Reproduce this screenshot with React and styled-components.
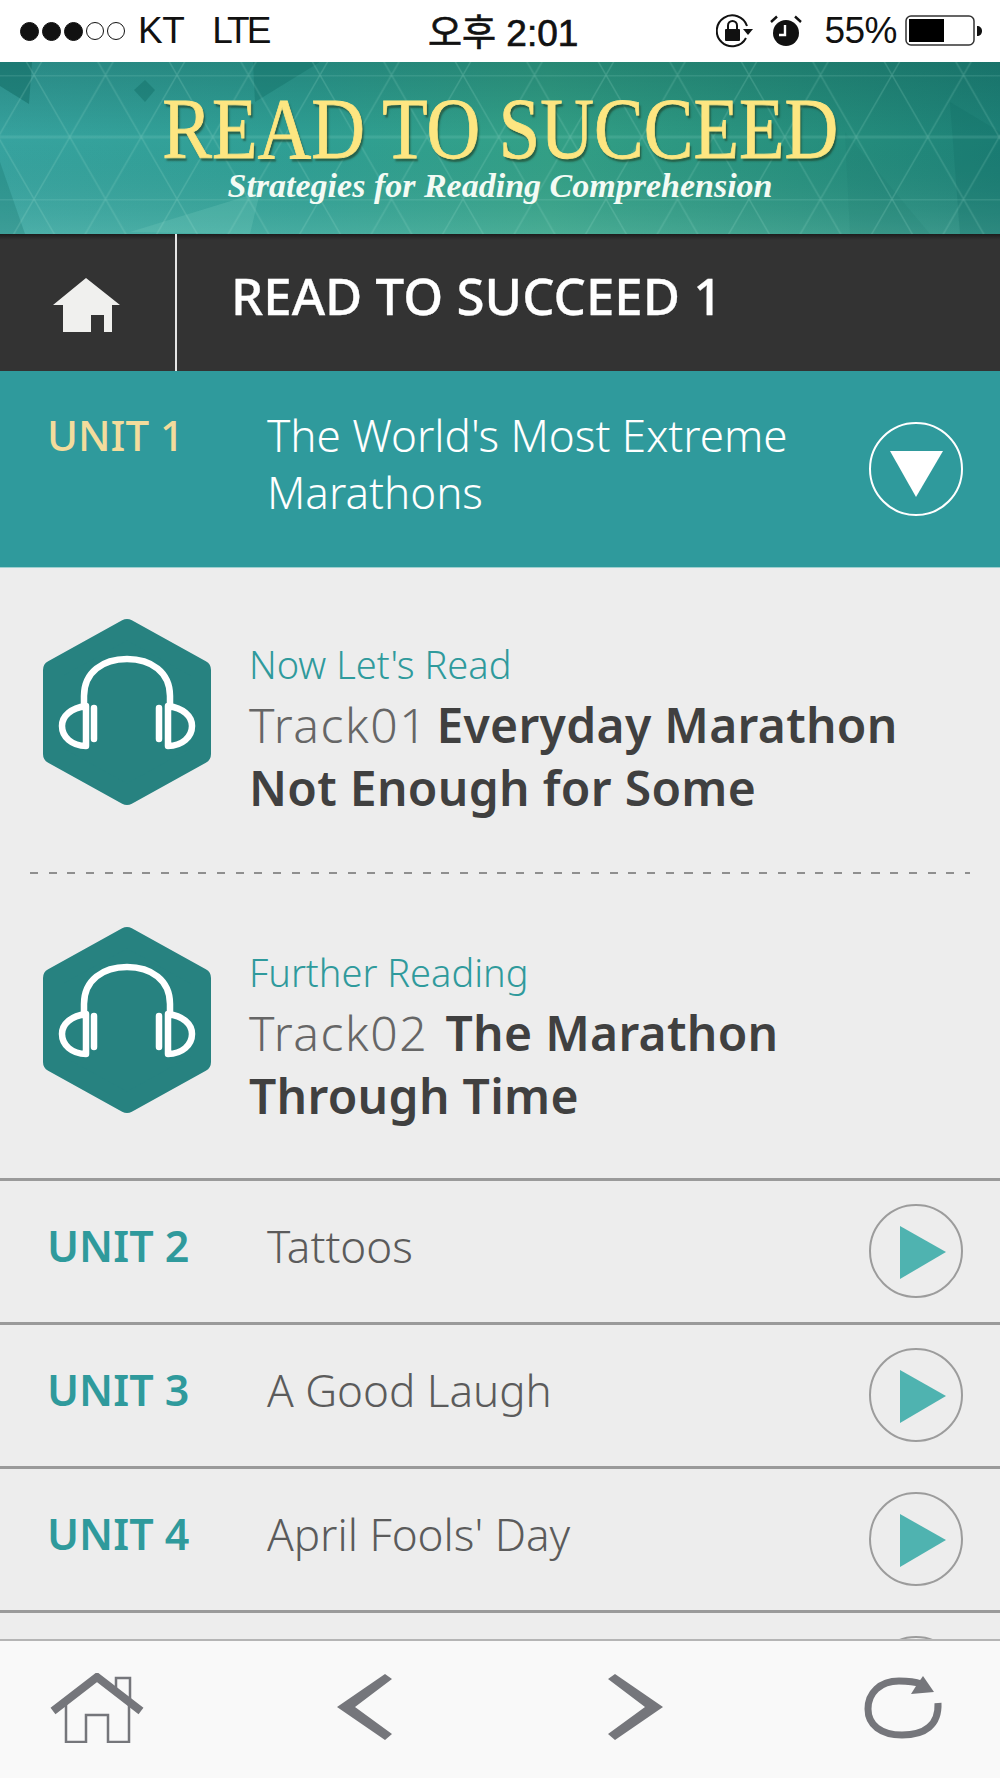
import styled, { createGlobalStyle } from "styled-components";

const GlobalStyle = createGlobalStyle`
  html, body {
    margin: 0;
    padding: 0;
    background: #ededed;
  }
  #root {
    width: 1000px;
    height: 1778px;
    overflow: hidden;
  }
`;

const TEXT_FONT = `"Noto Sans", "Open Sans", sans-serif`;

const Page = styled.div`
  position: relative;
  width: 1000px;
  height: 1778px;
  overflow: hidden;
  background: #ededed;
  font-family: ${TEXT_FONT};
`;

const StatusBar = styled.div`
  display: flex;
  align-items: center;
  height: 62px;
  background: #fff;
  color: #111;
  font-family: "Liberation Sans", Arial, sans-serif;
  font-size: 37px;
  letter-spacing: -0.5px;
`;

const StatusLeft = styled.div`
  display: flex;
  align-items: center;
  width: 428px;
  padding-left: 20px;
  box-sizing: border-box;
`;

const Dot = styled.span`
  width: ${(p) => (p.$on ? 19 : 18)}px;
  height: ${(p) => (p.$on ? 19 : 18)}px;
  margin-right: 3px;
  box-sizing: border-box;
  border-radius: 50%;
  border: 1px solid #111;
  background: ${(p) => (p.$on ? "#111" : "transparent")};
`;

const Carrier = styled.span`
  margin-left: 10px;
  margin-right: 28px;
`;

const Lte = styled.span`
  letter-spacing: -3px;
`;

const Clock = styled.div`
  width: 170px;
  margin-top: -2px;
  font-family: "Liberation Sans", "Noto Sans CJK KR", sans-serif;
  font-size: 37px;
  font-weight: 400;
  letter-spacing: 0;
  white-space: nowrap;
  -webkit-text-stroke: 0.7px #111;
`;

const StatusRight = styled.div`
  display: flex;
  align-items: center;
  margin-left: auto;
  padding-right: 17px;
`;

const LockIcon = styled.svg`
  margin-right: 16px;
`;

const Percent = styled.span`
  margin: 0 8px 0 22px;
`;

const Banner = styled.header`
  position: relative;
  display: flex;
  flex-direction: column;
  align-items: center;
  height: 172px;
  overflow: hidden;
  background: #2a8f83;
`;

const BannerArt = styled.svg`
  position: absolute;
  inset: 0;
`;

const BannerTitle = styled.h1`
  position: relative;
  margin: 31px 0 0;
  font-family: "Liberation Serif", "Times New Roman", serif;
  font-size: 86px;
  line-height: 72px;
  font-weight: 400;
  white-space: nowrap;
  color: #fde681;
  -webkit-text-stroke: 0.8px #fde681;
  text-shadow: 2px 3px 2px rgba(30, 55, 30, 0.6);
  transform: scaleX(0.866);
`;

const BannerSub = styled.div`
  position: relative;
  margin-top: 2px;
  font-family: "Liberation Serif", "Times New Roman", serif;
  font-size: 34px;
  line-height: 38px;
  font-weight: 700;
  font-style: italic;
  white-space: nowrap;
  color: #f3fbf4;
`;

const NavBar = styled.nav`
  display: flex;
  align-items: stretch;
  height: 137px;
  background: linear-gradient(#1d1d1d, #333 6px);
`;

const HomeCell = styled.div`
  display: flex;
  align-items: center;
  justify-content: center;
  width: 177px;
  padding: 4px 2px 0 0;
  box-sizing: border-box;
  border-right: 2px solid #e6e6e6;
`;

const NavTitle = styled.div`
  padding: 30px 0 0 54px;
  font-size: 51px;
  line-height: 62px;
  font-weight: 500;
  -webkit-text-stroke: 0.3px #fff;
  color: #fff;
`;

const OpenUnit = styled.div`
  display: flex;
  height: 197px;
  box-sizing: border-box;
  background: #2f9a9c;
  border-bottom: 1px solid #9fd0d0;
`;

const UnitLabel = styled.div`
  flex: none;
  width: 267px;
  padding-left: 47px;
  box-sizing: border-box;
  font-size: ${(p) => p.$size}px;
  font-weight: ${(p) => p.$weight};
  color: ${(p) => p.$color};
`;

const OpenLabel = styled(UnitLabel)`
  padding-top: 36px;
  line-height: 56px;
`;

const RowLabel = styled(UnitLabel)`
  margin-bottom: 12px;
`;

const OpenTitle = styled.div`
  flex: 1;
  padding-top: 36px;
  font-size: 44px;
  line-height: 57px;
  font-weight: 300;
  color: #fff;
`;

const RoundButton = styled.svg`
  flex: none;
  margin: 0 37px 2px 0;
`;

const OpenButton = styled(RoundButton)`
  margin-top: 51px;
`;

const TrackList = styled.section`
  padding: 50px 30px 0;
`;

const Track = styled.div`
  display: flex;
  align-items: flex-start;
  height: ${(p) => p.$height}px;
  box-sizing: border-box;
  padding: ${(p) => p.$top}px 0 0 13px;
`;

const HexIcon = styled.svg`
  flex: none;
  margin-right: 38px;
`;

const TrackText = styled.div`
  padding-top: 20px;
`;

const TrackKicker = styled.div`
  font-size: 38px;
  line-height: 52px;
  font-weight: 300;
  color: #2f9a9c;
`;

const TrackName = styled.div`
  margin-top: 3px;
  font-size: 48px;
  line-height: 63px;
  font-weight: 300;
  letter-spacing: 1.6px;
  white-space: nowrap;
  color: #666;
`;

const TrackTitle = styled.b`
  margin-left: ${(p) => p.$shift || 0}px;
  font-weight: 600;
  letter-spacing: 0.3px;
  color: #404040;
`;

const DashedRule = styled.div`
  height: 2px;
  background: repeating-linear-gradient(to right, #8f8f8f 0 8px, transparent 8px 18.7px);
`;

const UnitRow = styled.div`
  display: flex;
  align-items: center;
  height: 144px;
  box-sizing: border-box;
  border-top: 3px solid #9a9a9a;
`;

const RowTitle = styled.div`
  flex: 1;
  margin-bottom: 12px;
  font-size: 44px;
  font-weight: 300;
  color: #5b5b5b;
`;

const BottomBar = styled.footer`
  position: absolute;
  left: 0;
  right: 0;
  bottom: 0;
  height: 139px;
  box-sizing: border-box;
  border-top: 2px solid #b5b5b5;
  background: #f9f9f9;
`;

const BarIcon = styled.svg`
  position: absolute;
  top: ${(p) => p.$top}px;
  left: ${(p) => p.$left}px;
`;

const Signal = () => (
  <>
    {[true, true, true, false, false].map((on, i) => (
      <Dot key={i} $on={on} />
    ))}
  </>
);

const RotationLock = () => (
  <LockIcon width="38" height="34" viewBox="0 0 38 34">
    <path d="M31 12 A15.5 15.5 0 1 0 30 24" fill="none" stroke="#111" strokeWidth="2" />
    <path d="M27 15h10l-5 6z" fill="#111" />
    <rect x="9" y="15" width="15" height="12" rx="1" fill="#111" />
    <path d="M12 15v-3.5a4.5 4.5 0 0 1 9 0V15" fill="none" stroke="#111" strokeWidth="2" />
  </LockIcon>
);

const Alarm = () => (
  <svg width="32" height="32" viewBox="0 0 32 32">
    <circle cx="16" cy="18" r="13" fill="#111" />
    <path d="M15 10v10h-6" fill="none" stroke="#fff" strokeWidth="2.4" />
    <path d="M1 7 L7 1.5M31 7 L25 1.5" stroke="#111" strokeWidth="2.4" />
  </svg>
);

const Battery = () => (
  <svg width="78" height="32" viewBox="0 0 78 32">
    <rect x="1" y="1" width="68" height="29" rx="5" fill="#fff" stroke="#333" strokeWidth="1.5" />
    <rect x="4" y="4" width="35" height="23" fill="#000" />
    <path d="M72 11c3 0 5 2 5 5s-2 5-5 5z" fill="#111" />
  </svg>
);

const BannerBackground = () => (
  <BannerArt width="1000" height="172" viewBox="0 0 1000 172">
    <defs>
      <linearGradient id="bannerHue" x1="0" y1="0" x2="1" y2="0">
        <stop offset="0" stopColor="#37a39f" />
        <stop offset="0.3" stopColor="#2f9f94" />
        <stop offset="0.55" stopColor="#33a086" />
        <stop offset="0.8" stopColor="#27907e" />
        <stop offset="1" stopColor="#1e8278" />
      </linearGradient>
      <linearGradient id="bannerShade" x1="0" y1="0" x2="0" y2="1">
        <stop offset="0" stopColor="#0c4f4a" stopOpacity="0.3" />
        <stop offset="0.45" stopColor="#0c4f4a" stopOpacity="0" />
        <stop offset="1" stopColor="#bff0e0" stopOpacity="0.16" />
      </linearGradient>
      <pattern id="lattice" width="71.5" height="124" x="34" y="13" patternUnits="userSpaceOnUse">
        <path
          d="M0 0L71.5 124M71.5 0L0 124"
          fill="none"
          stroke="#a5e2d4"
          strokeOpacity="0.18"
          strokeWidth="1.5"
        />
        <path d="M0 0H71.5M0 62H71.5" fill="none" stroke="#a5e2d4" strokeOpacity="0.14" strokeWidth="3" />
      </pattern>
    </defs>
    <rect width="1000" height="172" fill="url(#bannerHue)" />
    <rect width="1000" height="172" fill="url(#bannerShade)" />
    <path d="M0 0H32L29 42L0 24Z" fill="#0f6a62" fillOpacity="0.5" />
    <path d="M134 28L145 18L155 28L145 40Z" fill="#0f6a62" fillOpacity="0.4" />
    <path d="M253 0H320L255 40Z" fill="#0f6a62" fillOpacity="0.35" />
    <path d="M0 100L25 172H0Z" fill="#0f6a62" fillOpacity="0.25" />
    <path d="M130 170L260 130L250 172Z" fill="#8fdccb" fillOpacity="0.18" />
    <path d="M950 40L1000 70V172H960Z" fill="#0f6a62" fillOpacity="0.25" />
    <path d="M845 70L930 172H850Z" fill="#0f6a62" fillOpacity="0.1" />
    <rect width="1000" height="172" fill="url(#lattice)" />
  </BannerArt>
);

const SolidHome = () => (
  <svg width="67" height="54" viewBox="0 0 67 54">
    <path d="M33 0L67 27H59V54H51V37H38V54H10V27H0Z" fill="#f0f0ee" />
  </svg>
);

const Headphones = () => (
  <g fill="none" stroke="#fff" strokeWidth="6.5" strokeLinecap="round" strokeLinejoin="round">
    <path d="M41 88V78C41 54 60 41 84 41C108 41 127 54 127 78V88" />
    <path d="M43 88C28 90 19 98 19 108C19 119 29 128 43 128Z" />
    <path d="M125 88C140 90 149 98 149 108C149 119 139 128 125 128Z" />
    <path d="M51 90V121M116 90V121" />
  </g>
);

const TrackHex = () => (
  <HexIcon width="168" height="188" viewBox="0 0 168 188">
    <path
      d="M84 11L158 52V136L84 177L10 136V52Z"
      fill="#278280"
      stroke="#278280"
      strokeWidth="20"
      strokeLinejoin="round"
    />
    <Headphones />
  </HexIcon>
);

const DownButton = () => (
  <OpenButton width="94" height="94" viewBox="0 0 94 94">
    <circle cx="47" cy="47" r="46" fill="none" stroke="#fff" strokeWidth="2" />
    <path d="M21 29H74L47 75Z" fill="#fff" />
  </OpenButton>
);

const PlayButton = () => (
  <RoundButton width="94" height="94" viewBox="0 0 94 94">
    <circle cx="47" cy="47" r="46" fill="none" stroke="#9c9c9c" strokeWidth="2" />
    <path d="M31 22L77 48L31 75Z" fill="#4fb3b0" />
  </RoundButton>
);

const units = [
  { label: "UNIT 2", title: "Tattoos" },
  { label: "UNIT 3", title: "A Good Laugh" },
  { label: "UNIT 4", title: "April Fools' Day" },
  { label: "", title: "" },
];

const App = () => {
  return (
    <Page>
      <GlobalStyle />
      <StatusBar>
        <StatusLeft>
          <Signal />
          <Carrier>KT</Carrier>
          <Lte>LTE</Lte>
        </StatusLeft>
        <Clock>오후 2:01</Clock>
        <StatusRight>
          <RotationLock />
          <Alarm />
          <Percent>55%</Percent>
          <Battery />
        </StatusRight>
      </StatusBar>

      <Banner>
        <BannerBackground />
        <BannerTitle>READ TO SUCCEED</BannerTitle>
        <BannerSub>Strategies for Reading Comprehension</BannerSub>
      </Banner>

      <NavBar>
        <HomeCell>
          <SolidHome />
        </HomeCell>
        <NavTitle>READ TO SUCCEED 1</NavTitle>
      </NavBar>

      <OpenUnit>
        <OpenLabel $color="#f3dc9c" $size={42} $weight={500}>
          UNIT 1
        </OpenLabel>
        <OpenTitle>
          The World's Most Extreme
          <br />
          Marathons
        </OpenTitle>
        <DownButton />
      </OpenUnit>

      <TrackList>
        <Track $height={254} $top={0}>
          <TrackHex />
          <TrackText>
            <TrackKicker>Now Let's Read</TrackKicker>
            <TrackName>
              Track01 <TrackTitle $shift={-6}>Everyday Marathon</TrackTitle>
              <br />
              <TrackTitle>Not Enough for Some</TrackTitle>
            </TrackName>
          </TrackText>
        </Track>
        <DashedRule />
        <Track $height={304} $top={52}>
          <TrackHex />
          <TrackText>
            <TrackKicker>Further Reading</TrackKicker>
            <TrackName>
              Track02 <TrackTitle $shift={3}>The Marathon</TrackTitle>
              <br />
              <TrackTitle>Through Time</TrackTitle>
            </TrackName>
          </TrackText>
        </Track>
      </TrackList>

      {units.map((unit, i) => (
        <UnitRow key={i}>
          <RowLabel $color="#2f9a9c" $size={43} $weight={600}>
            {unit.label}
          </RowLabel>
          <RowTitle>{unit.title}</RowTitle>
          <PlayButton />
        </UnitRow>
      ))}

      <BottomBar>
        <BarIcon $left={50} $top={32} width="94" height="70" viewBox="0 0 94 70">
          <path d="M3 38L47 4L91 38" fill="none" stroke="#75767b" strokeWidth="8" />
          <path
            d="M16 28V69H36V42H58V69H79V28M66 18V5H80V30"
            fill="none"
            stroke="#75767b"
            strokeWidth="2.5"
          />
        </BarIcon>
        <BarIcon $left={337} $top={32} width="56" height="68" viewBox="0 0 56 68">
          <path d="M0 34L48 1L55 6L18 34L55 61L48 67Z" fill="#75767b" />
        </BarIcon>
        <BarIcon $left={607} $top={32} width="56" height="68" viewBox="0 0 56 68">
          <path d="M56 34L8 1L1 6L38 34L1 61L8 67Z" fill="#75767b" />
        </BarIcon>
        <BarIcon $left={863} $top={34} width="82" height="66" viewBox="0 0 82 66">
          <path
            d="M58 9C50 6 44 6 36 6C17 6 5 18 5 34C5 50 18 60 39 60C62 60 76 50 75 28"
            fill="none"
            stroke="#75767b"
            strokeWidth="7"
          />
          <path d="M60 1L71 17L48 19L53 11Z" fill="#75767b" />
        </BarIcon>
      </BottomBar>
    </Page>
  );
};

export default App;
